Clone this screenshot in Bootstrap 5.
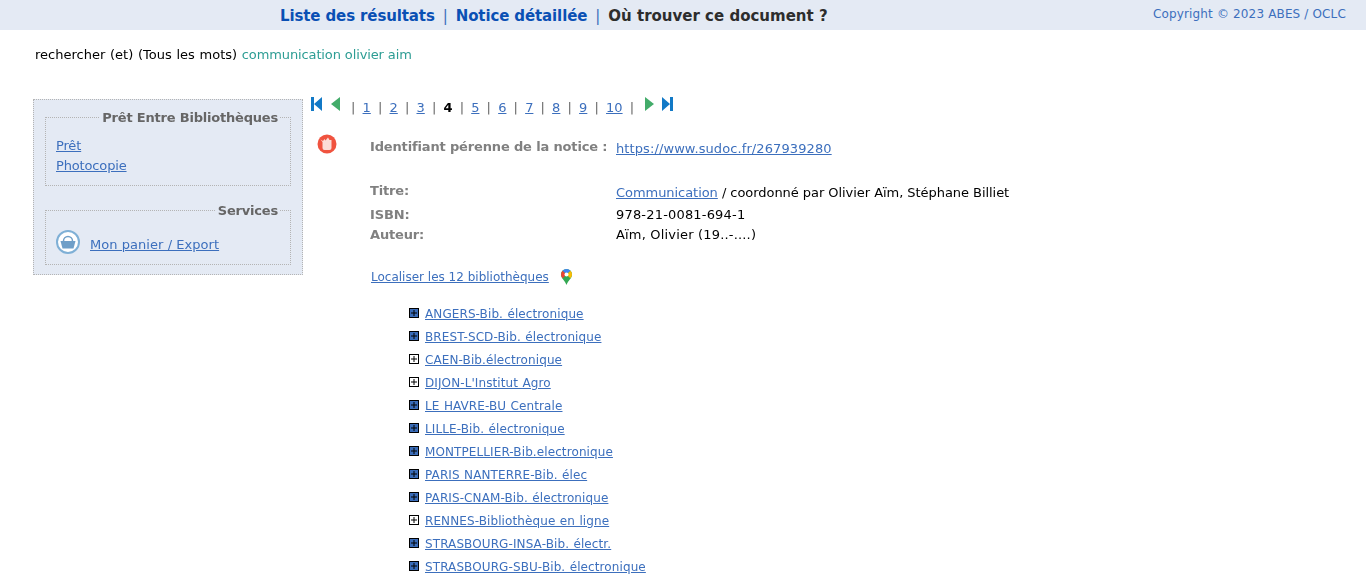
<!DOCTYPE html>
<html lang="fr">
<head>
  <meta charset="UTF-8">
  <title>Où trouver ce document ?</title>
  <link href="https://cdn.jsdelivr.net/npm/bootstrap@5.3.0/dist/css/bootstrap.min.css" rel="stylesheet">
  <style>
    html, body { height: 576px; overflow: hidden; }
    body { font-family: "DejaVu Sans", sans-serif; font-size: 13px; color: #000; background: #fff; line-height: 1.2; }
    a { color: #3c6fbd; }
    .top-bar { height: 30px; background: #e4eaf4; padding-left: 280px; padding-right: 20px; }
    .top-links { font-size: 15px; font-weight: 700; color: #2d2d2d; padding-top: 7px; }
    .top-links a { color: #0a50b4; text-decoration: none; letter-spacing: -.12px; }
    .top-links .sep { color: #3c6fbd; font-weight: 400; margin: 0 8px; }
    .copy-note { font-size: 12px; color: #3c6fbd; padding-top: 7px; letter-spacing: .15px; }
    .search-line { padding: 17px 0 0 35px; height: 69px; word-spacing: .6px; will-change: transform; }
    .search-terms { color: #2d9d94; letter-spacing: -.12px; word-spacing: 0; }
    .page-cols { align-items: flex-start; will-change: transform; }
    .side-box { width: 270px; margin-left: 33px; height: 176px; background: #e4eaf4; border: 1px dotted #b4b4b4; padding: 17px 11px 0; flex-shrink: 0; }
    .side-group { border: 1px dotted #b4b4b4; position: relative; padding: 20px 10px 0; }
    .side-group.pret { height: 69px; margin-bottom: 24px; }
    .side-group.serv { height: 55px; }
    .side-title { position: absolute; top: -8px; right: 11px; padding: 0 1px 0 2px; background: #e4eaf4; font-weight: 700; color: #666; letter-spacing: -.2px; }
    .side-group a { display: block; margin-bottom: 4px; letter-spacing: -.15px; }
    .basket-row { display: flex; align-items: flex-end; gap: 10px; margin-top: -1px; }
    .side-group .basket-row a { margin-bottom: 1px; letter-spacing: .05px; }
    .main-col { margin-left: 8px; margin-top: -4px; flex: 1; }
    .pager { height: 39px; display: flex; align-items: flex-start; padding-top: 1px; }
    .pager svg { display: block; margin-top: 1px; }
    .pager .arrow-next { margin-left: 11px; }
    .pager .arrow-last { margin-left: 7px; }
    .pager-nums { margin: 4px 0 0 11px; color: #666; word-spacing: 3.020px; }
    .pager-nums b { color: #000; }
    .notice-grid { margin-left: 6px; }
    .row-line { display: flex; }
    .row-ident { height: 49px; }
    .row-title { height: 24px; }
    .row-isbn { height: 20px; }
    .field-icon { width: 53px; flex-shrink: 0; }
    .field-name { width: 246px; flex-shrink: 0; font-weight: 700; color: #808080; letter-spacing: -.15px; }
    .pad-name { padding-top: 5px; }
    .pad-url { padding-top: 7px; letter-spacing: .1px; }
    .pad-title { padding-top: 2px; letter-spacing: -.05px; }
    .value-tight { letter-spacing: .18px; }
    .loc-line { margin: 27px 0 0 60px; font-size: 12px; display: flex; gap: 12px; align-items: flex-start; }
    .loc-line svg { margin-top: -1px; }
    .lib-list { list-style: none; margin: 22px 0 0 98px; padding: 0; font-size: 12px; letter-spacing: .1px; word-spacing: .5px; }
    .lib-list li { height: 23px; display: flex; align-items: flex-start; gap: 6px; }
    .plus-box { width: 10px; height: 10px; margin-top: 1px; flex-shrink: 0; display: block; }
  </style>
</head>
<body>
  <div class="top-bar d-flex justify-content-between">
    <div class="top-links"><a href="#">Liste des résultats</a><span class="sep">|</span><a href="#">Notice détaillée</a><span class="sep">|</span>Où trouver ce document ?</div>
    <div class="copy-note">Copyright © 2023 ABES / OCLC</div>
  </div>
  <div class="search-line">rechercher (et) (Tous les mots) <span class="search-terms">communication olivier aim</span></div>
  <div class="d-flex page-cols">
    <div class="side-box">
      <div class="side-group pret">
        <span class="side-title">Prêt Entre Bibliothèques</span>
        <a href="#">Prêt</a>
        <a href="#">Photocopie</a>
      </div>
      <div class="side-group serv">
        <span class="side-title">Services</span>
        <div class="basket-row">
          <svg width="24" height="24" viewBox="0 0 24 24"><circle cx="12" cy="12" r="11" fill="#fff" stroke="#7fb0d6" stroke-width="2"/><path d="M4.500 11h15l-2 7.500h-11z" fill="#6f9fc8"/><path d="M7.500 11a4.500 4.500 0 0 1 9 0" fill="none" stroke="#6f9fc8" stroke-width="1.500"/></svg>
          <a href="#">Mon panier / Export</a>
        </div>
      </div>
    </div>
    <div class="main-col">
      <div class="pager">
        <svg width="12" height="14" viewBox="0 0 12 14"><path d="M0 0h3v14H0zM3 7l8-7v14z" fill="#1279c6"/></svg>
        <svg class="ms-2" width="9" height="14" viewBox="0 0 9 14"><path d="M9 0v14L0 7z" fill="#43ac6a"/></svg>
        <div class="pager-nums">| <a href="#">1</a> | <a href="#">2</a> | <a href="#">3</a> | <b>4</b> | <a href="#">5</a> | <a href="#">6</a> | <a href="#">7</a> | <a href="#">8</a> | <a href="#">9</a> | <a href="#">10</a> |</div>
        <svg class="arrow-next" width="9" height="14" viewBox="0 0 9 14"><path d="M0 0v14l9-7z" fill="#43ac6a"/></svg>
        <svg class="arrow-last" width="12" height="14" viewBox="0 0 12 14"><path d="M9 0h3v14H9zM9 7L1 0v14z" fill="#1279c6"/></svg>
      </div>
      <div class="notice-grid">
        <div class="row-line row-ident">
          <div class="field-icon"><svg width="20" height="20" viewBox="0 0 20 20"><circle cx="10" cy="10" r="9.500" fill="#f0533f"/><path d="M3.500 5.500 6 7l1.500-2 1 1.500L11 3.500l1.500 2.500h2v8a2 2 0 0 1-2 2h-5a2 2 0 0 1-2-2V8z" fill="#fcdcd6"/></svg></div>
          <div class="field-name pad-name">Identifiant pérenne de la notice :</div>
          <div class="pad-url"><a href="#">https://www.sudoc.fr/267939280</a></div>
        </div>
        <div class="row-line row-title">
          <div class="field-icon"></div>
          <div class="field-name">Titre:</div>
          <div class="pad-title"><a href="#">Communication</a> / coordonné par Olivier Aïm, Stéphane Billiet</div>
        </div>
        <div class="row-line row-isbn">
          <div class="field-icon"></div>
          <div class="field-name">ISBN:</div>
          <div class="value-tight">978-21-0081-694-1</div>
        </div>
        <div class="row-line">
          <div class="field-icon"></div>
          <div class="field-name">Auteur:</div>
          <div class="value-tight">Aïm, Olivier (19..-....)</div>
        </div>
      </div>
      <div class="loc-line">
        <a href="#">Localiser les 12 bibliothèques</a>
        <svg width="11" height="16" viewBox="0 0 11 16"><path d="M5.500 0a5.500 5.500 0 0 1 5.500 5.500c0 4-4 6-5.500 10.500C4 11.500 0 9.500 0 5.500A5.500 5.500 0 0 1 5.500 0z" fill="#34a853"/><path d="M1.500 1.800A5.500 5.500 0 0 1 9.500 1.800L5.500 5.500z" fill="#4285f4"/><path d="M0 5.500a5.500 5.500 0 0 1 1.500-3.700l4 3.700-3.800 3.700C.7 8.200 0 7 0 5.500z" fill="#ea4335"/><path d="M9.500 1.800A5.500 5.500 0 0 1 11 5.500c0 1.500-.7 2.700-1.700 3.700L5.500 5.500z" fill="#fbbc04"/><circle cx="5.500" cy="5.500" r="2" fill="#fff"/></svg>
      </div>
      <ul class="lib-list" id="libs"></ul>
    </div>
  </div>
  <script>
    const libs = [
      ['ANGERS-Bib. électronique', 1], ['BREST-SCD-Bib. électronique', 1], ['CAEN-Bib.électronique', 0],
      ['DIJON-L\'Institut Agro', 0], ['LE HAVRE-BU Centrale', 1], ['LILLE-Bib. électronique', 1],
      ['MONTPELLIER-Bib.electronique', 1], ['PARIS NANTERRE-Bib. élec', 1], ['PARIS-CNAM-Bib. électronique', 1],
      ['RENNES-Bibliothèque en ligne', 0], ['STRASBOURG-INSA-Bib. électr.', 1], ['STRASBOURG-SBU-Bib. électronique', 1]
    ];
    document.getElementById('libs').innerHTML = libs.map(([name, blue]) => {
      const fill = blue ? '#3a6cb8' : '#fff';
      return `<li><svg class="plus-box" viewBox="0 0 10 10"><rect x=".5" y=".5" width="9" height="9" fill="${fill}" stroke="#000"/><path d="M5 2v6M2 5h6" stroke="#000"/></svg><a href="#">${name}</a></li>`;
    }).join('');
  </script>
</body>
</html>
